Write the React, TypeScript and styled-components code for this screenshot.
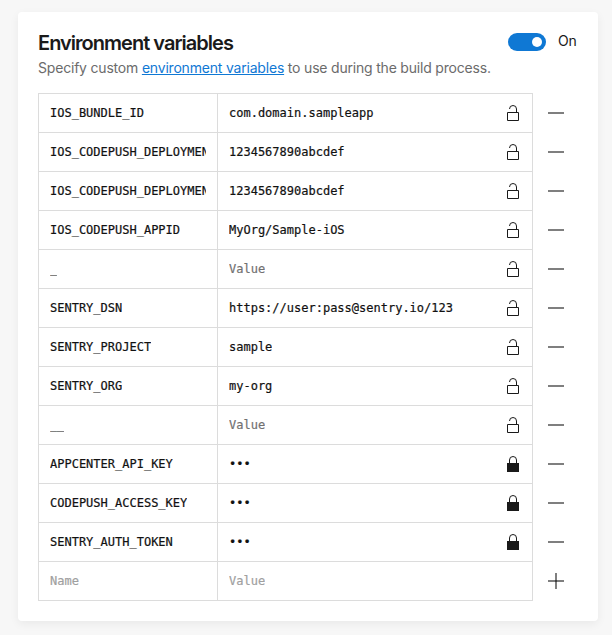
import React from "react";
import styled, { createGlobalStyle } from "styled-components";

const GlobalStyle = createGlobalStyle`
  *, *::before, *::after { box-sizing: border-box; }
  body {
    margin: 0;
    background: #f7f7f7;
    color: #1a1a1a;
    font-family: Inter, "Liberation Sans", sans-serif;
    font-size: 14px;
  }
`;

const Page = styled.main`
  height: 635px;
  padding: 12px 14px 14px 18px;
  overflow: hidden;
`;

const Card = styled.section`
  height: 609px;
  padding: 20px;
  background: #fff;
  border-radius: 4px;
  box-shadow: 0 3px 10px rgba(0, 0, 0, 0.06);
`;

const Header = styled.header`
  display: flex;
  justify-content: space-between;
  height: 24px;
`;

const Title = styled.h2`
  margin: 0;
  font-size: 20px;
  font-weight: 600;
  line-height: 23px;
  letter-spacing: -0.98px;
  white-space: nowrap;
`;

const ToggleField = styled.div`
  display: flex;
  gap: 12px;
  width: 70px;
  padding-top: 1px;
  line-height: 16px;
  letter-spacing: -0.18px;
`;

const Switch = styled.button`
  display: flex;
  flex: none;
  align-items: center;
  justify-content: flex-end;
  width: 38px;
  height: 18px;
  padding: 0 4px;
  border: 0;
  border-radius: 9px;
  background: #0f78d4;
`;

const Knob = styled.span`
  width: 10px;
  height: 10px;
  border-radius: 50%;
  background: #fff;
`;

const Description = styled.p`
  margin: 2px 0 15px;
  height: 20px;
  color: #6b6b6b;
  line-height: 20px;
  letter-spacing: -0.195px;
  white-space: nowrap;
`;

const Link = styled.a`
  color: #0f78d4;
  text-decoration: underline;
  text-underline-offset: 1px;
  text-decoration-thickness: 1px;
  text-decoration-skip-ink: none;
`;

const Variables = styled.div`
  display: flex;
  flex-direction: column;
  font: 12px/14px "DejaVu Sans Mono", monospace;
`;

const Row = styled.div`
  display: grid;
  grid-template-columns: 495px 16px;
  column-gap: 15px;
  height: 39px;

  &:last-child { height: 40px; }
`;

const Fields = styled.div`
  display: grid;
  grid-template-columns: 178px 1fr;
  border: 1px solid #dcdcdc;
  border-bottom-width: 0;

  ${Row}:last-child & { border-bottom-width: 1px; }
`;

type Tone = "text" | "empty" | "placeholder";
const tones: Record<Tone, string> = { text: "#111", empty: "#717171", placeholder: "#a0a0a0" };

const Cell = styled.div<{ $tone: Tone }>`
  display: flex;
  min-width: 0;
  padding: 12px 11px 0;
  color: ${(p) => tones[p.$tone]};

  & + & {
    justify-content: space-between;
    padding-right: 13px;
    border-left: 1px solid #dcdcdc;
  }
`;

const CellText = styled.span`
  overflow: hidden;
  height: 16px;
  white-space: nowrap;
  -webkit-text-stroke: 0.2px currentColor;
`;

const IconButton = styled.button`
  display: block;
  width: 16px;
  height: 16px;
  margin-top: 12px;
  padding: 0;
  border: 0;
  background: none;

  svg { display: block; }
`;

const LockIcon = styled.svg`
  display: block;
  flex: none;
  margin-top: -1px;
`;

function Lock({ closed }: { closed: boolean }) {
  return (
    <LockIcon width="12" height="16" viewBox="0 0 12 16" fill="none" stroke="#1a1a1a">
      {closed ? (
        <>
          <path d="M2.5 7V4a3.5 3.5 0 0 1 7 0v3" />
          <path d="M0 7h12v9H0z" fill="#1a1a1a" stroke="none" />
        </>
      ) : (
        <>
          <path d="M2.5 4A3.5 3.5 0 0 1 9.5 4v3.5" />
          <path d="M.5 7.5h11v8H.5z" />
        </>
      )}
    </LockIcon>
  );
}

function Action({ add }: { add: boolean }) {
  return (
    <IconButton aria-label={add ? "Add variable" : "Remove variable"}>
      <svg width="16" height="16" viewBox="0 0 16 16" stroke="#000" strokeOpacity=".5" strokeWidth="2">
        <path d="M0 8h16" />
        {add && <path d="M8 0v16" />}
      </svg>
    </IconButton>
  );
}

interface Variable {
  name: string;
  value: string;
  secret?: boolean;
}

const variables: Variable[] = [
  { name: "IOS_BUNDLE_ID", value: "com.domain.sampleapp" },
  { name: "IOS_CODEPUSH_DEPLOYMENT", value: "1234567890abcdef" },
  { name: "IOS_CODEPUSH_DEPLOYMENT", value: "1234567890abcdef" },
  { name: "IOS_CODEPUSH_APPID", value: "MyOrg/Sample-iOS" },
  { name: "_", value: "" },
  { name: "SENTRY_DSN", value: "https://user:pass@sentry.io/123" },
  { name: "SENTRY_PROJECT", value: "sample" },
  { name: "SENTRY_ORG", value: "my-org" },
  { name: "__", value: "" },
  { name: "APPCENTER_API_KEY", value: "•••", secret: true },
  { name: "CODEPUSH_ACCESS_KEY", value: "•••", secret: true },
  { name: "SENTRY_AUTH_TOKEN", value: "•••", secret: true },
];

export default function App() {
  return (
    <>
      <GlobalStyle />
      <Page>
        <Card>
          <Header>
            <Title>Environment variables</Title>
            <ToggleField>
              <Switch role="switch" aria-checked="true" aria-label="Environment variables">
                <Knob />
              </Switch>
              <span>On</span>
            </ToggleField>
          </Header>
          <Description>
            Specify custom <Link>environment variables</Link> to use during the build process.
          </Description>
          <Variables>
            {variables.map((item, index) => (
              <Row key={index}>
                <Fields>
                  <Cell $tone="text">
                    <CellText>{item.name}</CellText>
                  </Cell>
                  <Cell $tone={item.value ? "text" : "empty"}>
                    <CellText>{item.value || "Value"}</CellText>
                    <Lock closed={!!item.secret} />
                  </Cell>
                </Fields>
                <Action add={false} />
              </Row>
            ))}
            <Row>
              <Fields>
                <Cell $tone="placeholder">
                  <CellText>Name</CellText>
                </Cell>
                <Cell $tone="placeholder">
                  <CellText>Value</CellText>
                </Cell>
              </Fields>
              <Action add />
            </Row>
          </Variables>
        </Card>
      </Page>
    </>
  );
}
